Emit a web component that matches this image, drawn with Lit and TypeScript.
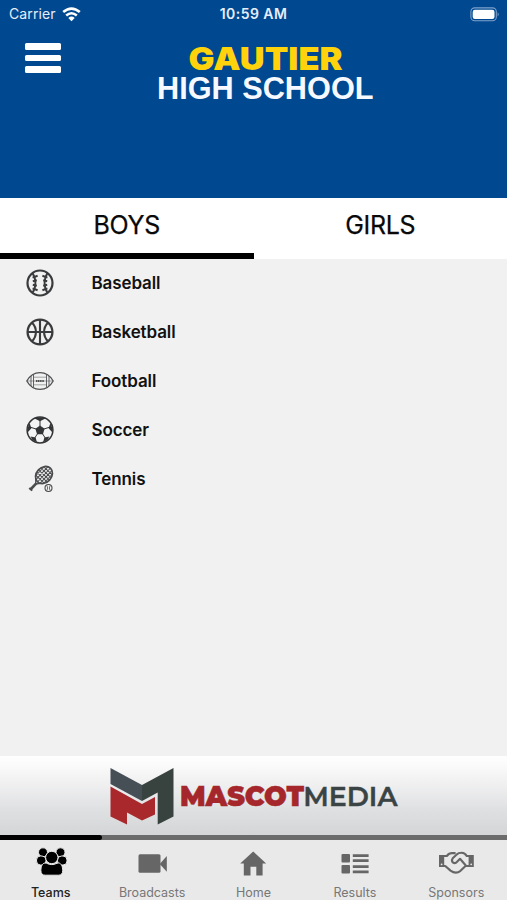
import { LitElement, html, svg, css } from "lit";
import { customElement, property, state } from "lit/decorators.js";
import { classMap } from "lit/directives/class-map.js";

const seam = (flip: boolean) => svg`
  <g transform=${flip ? "translate(28 0) scale(-1 1)" : ""}>
    <path d="M6.400 4C10.400 9.600 10.400 18.400 6.400 24" stroke-width="1.900"/>
    <path d="M6.600 8.600l5-1.800M6.800 12.200l4-.9M6.800 15.800l4 .9M6.600 19.400l5 1.800" stroke-width="2"/>
  </g>`;

const sportIcons: Record<string, unknown> = {
  Baseball: svg`<g fill="none" stroke="#3a3b3d"><circle cx="14" cy="14" r="12.500" stroke-width="2.200"/>${seam(false)}${seam(true)}</g>`,
  Basketball: svg`<g fill="none" stroke="#3a3b3d" stroke-width="2.100">
    <circle cx="14" cy="14" r="12.400" stroke-width="2.300"/>
    <path d="M14 1.500v25M1.500 14h25M6 4.800c5.200 5 5.200 13.400 0 18.400M22 4.800c-5.200 5-5.200 13.400 0 18.400"/></g>`,
  Football: svg`<g fill="none" stroke="#4f5052" stroke-width="1">
    <path d="M.8 14C3.800 8.600 8.800 5.600 14 5.600S24.200 8.600 27.200 14C24.200 19.400 19.200 22.400 14 22.400S3.800 19.400.8 14Z" stroke-width="1.300"/>
    <path d="M5 9v10M7.500 7.500v13M20.500 7.500v13M23 9v10" stroke-width=".9"/>
    <path d="M8 10.200h12M8 17.800h12M1 14h26" stroke-width=".5"/>
    <path d="M10 14h8" stroke-width="2" stroke-dasharray="1.300 .5"/></g>`,
  Soccer: svg`<circle cx="14" cy="14" r="12.900" fill="#f4f4f4" stroke="#333436" stroke-width="1.500"/>
    <g fill="#333436">
      <path d="M14 9.400l4.600 3.400-1.700 5.400h-5.800l-1.700-5.400Z"/>
      <path d="M8.600 2.400Q14 0 19.400 2.400L14 5.200ZM24.400 7l2.400 6.200-.6 3-3.600-4ZM3.600 7L1.200 13.200l.6 3 3.600-4ZM18.400 21.600l5-1.200-1.800 3.400-4.600 2.600ZM9.600 21.600l-5-1.200 1.800 3.400 4.600 2.600Z"/>
    </g>
    <path d="M14 4v6M18 13l5.600-1.800M16.400 17.600l3 4.600M11.600 17.600l-3 4.600M10 13l-5.600-1.800" stroke="#333436" stroke-width="1"/>`,
  Tennis: svg`<g fill="none" stroke="#4a4b4d">
    <g transform="rotate(43 18 10)">
      <ellipse cx="18" cy="10" rx="7.600" ry="9.400" stroke-width="1.700"/>
      <path d="M12.500 4.500v11M15.200 1.500v17M18 .8v18.400M20.800 1.500v17M23.500 4.500v11M12 4.200h12M10.800 7.100h14.400M10.400 10h15.200M10.800 12.900h14.400M12 15.800h12" stroke-width="1"/>
      <path d="M14.500 18.200l3.500 4 3.500-4" stroke-width="1.300"/>
      <path d="M18 21v8.500" stroke-width="2.600"/><path d="M16 29.500h4" stroke-width="2"/>
    </g>
    <circle cx="22.500" cy="23" r="3.500" fill="#f1f1f1" stroke-width="1.100"/>
    <path d="M20.800 20.400q1.800 2.600 0 5.200M24.200 20.400q-1.800 2.600 0 5.200" stroke-width=".8"/></g>`,
};

const navIcons: Record<string, unknown> = {
  Teams: svg`<g stroke="#e9e9e9" stroke-width="1">
    <circle cx="11" cy="7.300" r="4.500"/><circle cx="28.500" cy="7.300" r="4.500"/>
    <rect x="4.500" y="11" width="9.500" height="9" rx="4"/><rect x="25.500" y="11" width="9.500" height="9" rx="4"/>
    <path d="M13 18c2.500 0 3 1.600 6.800 1.600s4.300-1.600 6.800-1.600c2.700 0 4.100 3.800 4.100 7.500 0 3.200-1.400 4.700-4.300 4.700H13.200c-2.900 0-4.300-1.500-4.300-4.700 0-3.700 1.400-7.500 4.100-7.500Z"/>
    <circle cx="19.800" cy="12.500" r="6.200"/></g>`,
  Broadcasts: svg`<rect x="5.500" y="9.300" width="22" height="18.500" rx="1.500"/><path d="M27.200 18.500L33.800 11v15.700l-6.600-7.200Z"/>`,
  Home: svg`<path d="M19.200 6.500l13 12.100h-3.600v11.900h-6.300v-8.800h-5.800v8.800H9.800V18.600H6.200Z"/>`,
  Results: svg`<rect x="5.500" y="9" width="8.500" height="8.500" rx="1"/><rect x="5.500" y="20" width="8.500" height="8.500" rx="1"/>
    <path d="M16.800 9.200h15.800v2.800h-15.800zM16.800 14.200h15.800v2.800h-15.800zM16.800 20.200h15.800v2.800h-15.800zM16.800 25.400h15.800v2.800h-15.800z"/>`,
  Sponsors: svg`<path d="M2 10h5.200v12H2ZM31.600 10h5.200v12h-5.200Z"/>
    <g fill="none" stroke="#666" stroke-width="2.100" stroke-linejoin="round" stroke-linecap="round">
    <path d="M7 11h2.800q2.200-2.900 5.200-2.900h2.800M32 11h-2.300q-1.800-3.200-5-3.200-3.400 0-5 1.700l-4 3.800q-1.700 2.600.4 4.300 2.100 1.400 4.200-1l2.700-2.800 5.800 6.700"/>
    <path d="M7 21h1.300l5.200 4.600q5.400 3.800 10 .2l5-4.800H32"/></g>
    <circle cx="4.600" cy="19.300" r=".9" fill="#e9e9e9"/><circle cx="34.200" cy="19.300" r=".9" fill="#e9e9e9"/>`,
};

@customElement("status-bar")
class StatusBar extends LitElement {
  static styles = css`
    :host { display: grid; grid-template-columns: 1fr auto 1fr; align-items: center; height: 28px; padding: 0 7px; color: #e6eefb; font-size: 14px; line-height: 28px; }
    .carrier { display: flex; align-items: center; gap: 6px; padding-left: 2px; letter-spacing: .12px; }
    .time { font-weight: 600; letter-spacing: .45px; }
    .battery { justify-self: end; }
    svg { display: block; }
  `;
  render() {
    return html`
      <div class="carrier"><span>Carrier</span>
        <svg width="19" height="15" viewBox="0 0 19 15" fill="none" stroke="#fff" stroke-width="2.600">
          <path d="M1.200 5.100Q9.500-2 17.800 5.100M4.200 8.500Q9.500 4 14.800 8.500"/>
          <path d="M6.300 10.900Q9.500 8.200 12.700 10.900L9.500 14.200Z" fill="#fff" stroke="none"/>
        </svg>
      </div>
      <div class="time">10:59 AM</div>
      <svg class="battery" width="30" height="15" viewBox="0 0 30 15">
        <rect x=".9" y=".9" width="25.400" height="12.800" rx="3.800" fill="none" stroke="#7fa2cb" stroke-width="1.100"/>
        <rect x="2.700" y="2.700" width="21.800" height="9.200" rx="2.200" fill="#fff"/>
        <path d="M27.600 5.200q2.200 2.100 0 4.200Z" fill="#7fa2cb"/>
      </svg>`;
  }
}

@customElement("sport-row")
class SportRow extends LitElement {
  @property() name = "";
  static styles = css`
    :host { display: flex; align-items: center; box-sizing: border-box; height: 49px; padding: 0 0 2px 26px; gap: 37.500px; }
    svg { display: block; flex: none; }
    .name { font-size: 17px; font-weight: 600; color: #111; letter-spacing: -.11px; }
  `;
  render() {
    return html`<svg width="28" height="28" viewBox="0 0 28 28">${sportIcons[this.name]}</svg><span class="name">${this.name}</span>`;
  }
}

@customElement("mascot-banner")
class MascotBanner extends LitElement {
  static styles = css`
    :host { display: flex; justify-content: center; height: 79px; background: linear-gradient(#fff, #f0f0f1 35%, #dfe0e2 68%, #d4d5d6); }
    svg { display: block; }
    .word { font-family: Montserrat, Inter, sans-serif; font-size: 28px; }
    .bold { font-weight: 900; fill: #a5272b; stroke: #a5272b; stroke-width: .4px; }
    .thin { font-weight: 600; fill: #3b4444; stroke: #3b4444; stroke-width: .4px; }
  `;
  render() {
    return html`<svg width="300" height="79" viewBox="-4.500 0 300 79">
      <path d="M2 12l31.500 17L33.500 45 2 28Z" fill="#464e56"/>
      <path d="M65 12L33.500 29V45L49.200 36.500V68.500L65 60.500Z" fill="#38433f"/>
      <path d="M2 30.500l31.500 17.500 13-7V58.500L33.500 64.500 18.500 56.500V68.500L2 60.500Z" fill="#a8282c"/>
      <text class="word bold" x="71.500" y="50.200" textLength="124" lengthAdjust="spacingAndGlyphs">MASCOT</text>
      <text class="word thin" x="194.700" y="50.200" textLength="94.300" lengthAdjust="spacingAndGlyphs">MEDIA</text>
    </svg>`;
  }
}

@customElement("app-root")
class AppRoot extends LitElement {
  @state() private gender = "BOYS";
  @state() private page = "Teams";
  static styles = css`
    :host { display: flex; flex-direction: column; height: 900px; background: #f1f1f1; font-family: Inter, "Liberation Sans", sans-serif; overflow: hidden; }
    svg { display: block; }
    .header { height: 198px; background: #00488f; }
    .brand { display: grid; grid-template-columns: 133px 1fr 109px; }
    .menu { display: flex; flex-direction: column; gap: 5px; padding: 15px 0 0 25px; }
    .bar { width: 35.500px; height: 6.600px; border-radius: 1.500px; background: #fff; }
    .first { font-family: Inter, sans-serif; font-weight: 900; fill: #fed30b; font-size: 31px; }
    .second { font-family: "Liberation Sans", sans-serif; font-weight: 700; fill: #f6f9ff; font-size: 32px; }
    .tabs { display: grid; grid-template-columns: 1fr 1fr; height: 61px; background: #fff; }
    .tab { box-sizing: border-box; height: 61px; display: flex; justify-content: center; padding-top: 1px; border-bottom: 6.500px solid transparent; font-size: 25px; line-height: 53px; letter-spacing: -.3px; color: #090909; -webkit-text-stroke: .25px #090909; cursor: pointer; }
    .tab.on { border-bottom-color: #000; }
    .list { flex: 1; }
    .track { height: 5px; background: #6b6b6b; }
    .thumb { width: 102px; height: 5px; border-radius: 0 3px 3px 0; background: #000; }
    .nav { display: grid; grid-template-columns: repeat(5, 1fr); height: 60px; background: #e9e9e9; }
    .item { display: flex; flex-direction: column; align-items: center; fill: #666; color: #777; font-size: 12.500px; line-height: 16px; cursor: pointer; padding-top: 5px; gap: 6px; }
    .item.on { fill: #000; color: #222; font-weight: 500; }
  `;
  render() {
    return html`
      <div class="header">
        <status-bar></status-bar>
        <div class="brand">
          <div class="menu"><div class="bar"></div><div class="bar"></div><div class="bar"></div></div>
          <svg width="265" height="80" viewBox="133 28 265 80">
            <text class="first" x="188.500" y="69.700" textLength="154" lengthAdjust="spacingAndGlyphs">GAUTIER</text>
            <text class="second" x="157" y="99.200" textLength="216.500" lengthAdjust="spacingAndGlyphs">HIGH SCHOOL</text>
          </svg>
        </div>
      </div>
      <div class="tabs">
        ${["BOYS", "GIRLS"].map((g) => html`<div class=${classMap({ tab: true, on: g === this.gender })} @click=${() => (this.gender = g)}>${g}</div>`)}
      </div>
      <div class="list">${Object.keys(sportIcons).map((n) => html`<sport-row .name=${n}></sport-row>`)}</div>
      <mascot-banner></mascot-banner>
      <div class="track"><div class="thumb"></div></div>
      <div class="nav">
        ${Object.keys(navIcons).map((n) => html`
          <div class=${classMap({ item: true, on: n === this.page })} @click=${() => (this.page = n)}>
            <svg width="38" height="34" viewBox="0 0 38 34">${navIcons[n]}</svg><span>${n}</span>
          </div>`)}
      </div>`;
  }
}
